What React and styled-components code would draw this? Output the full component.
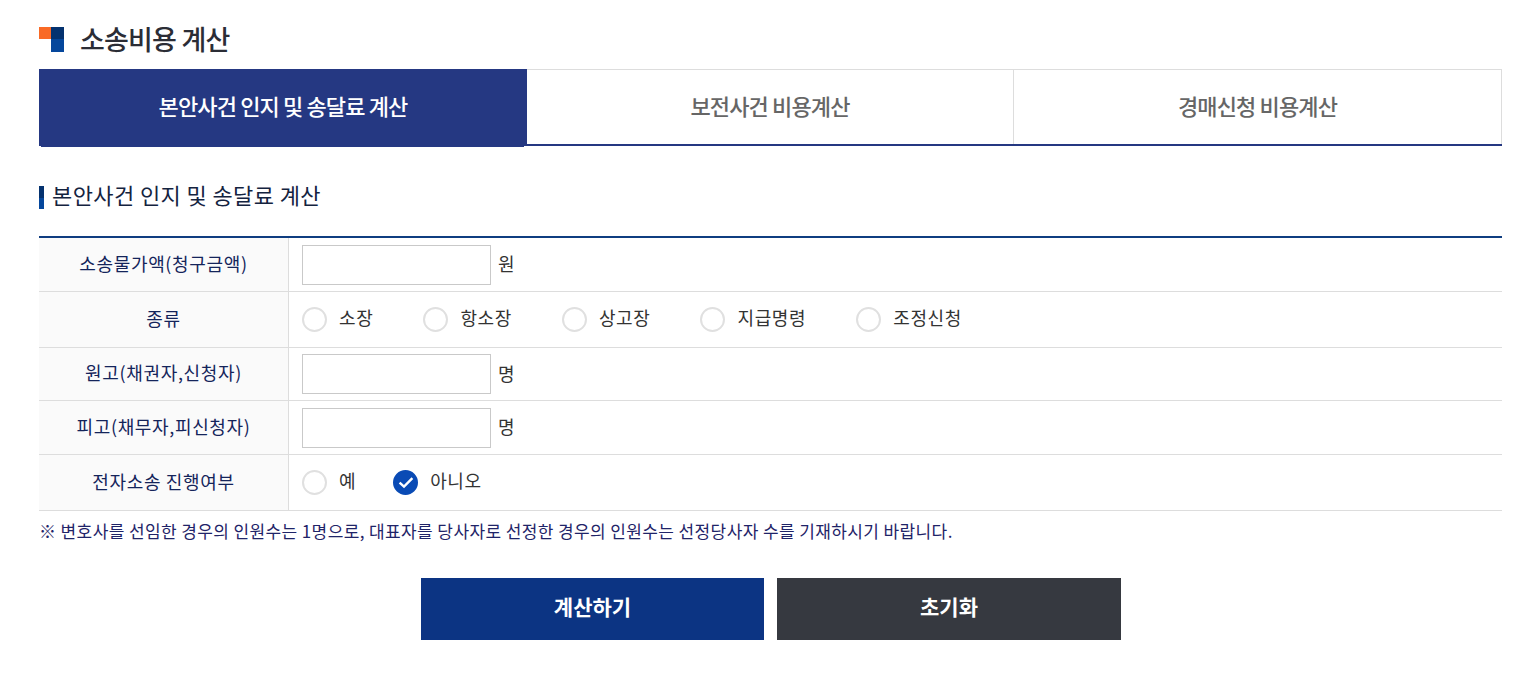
import styled, { createGlobalStyle } from "styled-components"

const GlobalStyle = createGlobalStyle`
  html, body { margin: 0; padding: 0; background: #fff; }
  body { font-family: "Noto Sans CJK KR", "Noto Sans", sans-serif; color: #222; }
  * { box-sizing: border-box; }
`

const kinds = ["소장", "항소장", "상고장", "지급명령", "조정신청"]

const App = () => {
  return (
    <Page>
      <GlobalStyle />
      <TitleRow>
        <TitleMark>
          <svg width="25" height="25" viewBox="0 0 25 25">
            <rect x="0" y="0" width="12" height="12" fill="#f96a26" />
            <rect x="12" y="0" width="13" height="12" fill="#04326f" />
            <rect x="12" y="12" width="13" height="13" fill="#05479c" />
          </svg>
        </TitleMark>
        <Title>소송비용 계산</Title>
      </TitleRow>

      <Tabs>
        <Tab $active>본안사건 인지 및 송달료 계산</Tab>
        <Tab>보전사건 비용계산</Tab>
        <Tab>경매신청 비용계산</Tab>
      </Tabs>

      <SubTitle>본안사건 인지 및 송달료 계산</SubTitle>

      <Table>
        <Row $h={54}>
          <Label>소송물가액(청구금액)</Label>
          <Cell>
            <Field type="text" />
            <Unit>원</Unit>
          </Cell>
        </Row>
        <Row $h={56}>
          <Label>종류</Label>
          <Cell>
            <Radios $gap={50}>
              {kinds.map((k) => (
                <RadioItem key={k}>
                  <RadioDot />
                  <RadioText>{k}</RadioText>
                </RadioItem>
              ))}
            </Radios>
          </Cell>
        </Row>
        <Row $h={53}>
          <Label>원고(채권자,신청자)</Label>
          <Cell>
            <Field type="text" />
            <Unit>명</Unit>
          </Cell>
        </Row>
        <Row $h={54}>
          <Label>피고(채무자,피신청자)</Label>
          <Cell>
            <Field type="text" />
            <Unit>명</Unit>
          </Cell>
        </Row>
        <Row $h={56}>
          <Label>전자소송 진행여부</Label>
          <Cell>
            <Radios $gap={37}>
              <RadioItem>
                <RadioDot />
                <RadioText>예</RadioText>
              </RadioItem>
              <RadioItem>
                <RadioDot $checked>
                  <svg width="16" height="13" viewBox="0 0 16 13" fill="none">
                    <path d="M1.6 6.6 L6 10.6 L14.4 2.2" stroke="#fff" strokeWidth="2.4" />
                  </svg>
                </RadioDot>
                <RadioText>아니오</RadioText>
              </RadioItem>
            </Radios>
          </Cell>
        </Row>
      </Table>

      <Notice>※ 변호사를 선임한 경우의 인원수는 1명으로, 대표자를 당사자로 선정한 경우의 인원수는 선정당사자 수를 기재하시기 바랍니다.</Notice>

      <Buttons>
        <Button $bg="#0c3483" $w={343}>계산하기</Button>
        <Button $bg="#363940" $w={344}>초기화</Button>
      </Buttons>
    </Page>
  )
}

export default App

const Page = styled.div`
  width: 1518px;
  padding: 0 16px 43px 39px;
`
const TitleRow = styled.div`
  display: flex;
  align-items: center;
  height: 69px;
  padding-top: 9px;
`
const TitleMark = styled.div`
  display: flex;
  width: 41px;
  height: 25px;
`
const Title = styled.h1`
  margin: 0;
  font-size: 27px;
  font-weight: 500;
  letter-spacing: -0.8px;
  line-height: 40px;
  color: #2b2d36;
`
const Tabs = styled.div`
  display: grid;
  grid-template-columns: 488px 487px 488px;
  height: 77px;
  border-bottom: 2px solid #253882;
`
const Tab = styled.div`
  position: relative;
  display: flex;
  align-items: center;
  justify-content: center;
  height: ${(p) => (p.$active ? "76px" : "75px")};
  font-size: 22px;
  font-weight: 500;
  letter-spacing: -0.87px;
  padding-bottom: 5px;
  padding-left: ${(p) => (p.$active ? "1px" : "0")};
  color: ${(p) => (p.$active ? "#fff" : "#666")};
  background: ${(p) => (p.$active ? "#253882" : "#fff")};
  border-top: 1px solid ${(p) => (p.$active ? "#253882" : "#ddd")};
  border-right: 1px solid ${(p) => (p.$active ? "#253882" : "#ddd")};

  &::after {
    content: "";
    display: ${(p) => (p.$active ? "block" : "none")};
    position: absolute;
    left: 2px;
    right: 2px;
    bottom: -2px;
    height: 2px;
    background: #253882;
  }
`
const SubTitle = styled.h2`
  margin: 36px 0 0;
  height: 27px;
  padding-left: 13px;
  position: relative;
  font-size: 22px;
  font-weight: 400;
  line-height: 24px;
  letter-spacing: 0.4px;
  color: #14233f;

  &::before {
    content: "";
    position: absolute;
    left: 0;
    top: 4px;
    width: 5px;
    height: 23px;
    background: linear-gradient(#04326f 50%, #05479c 50%);
  }
`
const Table = styled.div`
  margin-top: 27px;
  border-top: 2px solid #0f3d80;
`
const Row = styled.div`
  display: flex;
  height: ${(p) => p.$h}px;
  border-bottom: 1px solid #ddd;
`
const Label = styled.div`
  display: flex;
  align-items: center;
  justify-content: center;
  width: 250px;
  padding-bottom: 4px;
  background: #fafafa;
  border-right: 1px solid #ddd;
  font-size: 18px;
  font-weight: 400;
  letter-spacing: 0.65px;
  color: #14245a;
`
const Cell = styled.div`
  flex: 1;
  display: flex;
  align-items: center;
  padding-left: 13px;
`
const Field = styled.input`
  width: 189px;
  height: 40px;
  margin: 0;
  padding: 0 8px;
  border: 1px solid #c9c9c9;
  border-radius: 0;
  background: #fff;
  outline: none;
`
const Unit = styled.span`
  margin: -3px 0 0 7px;
  font-size: 18px;
  letter-spacing: 0.5px;
  color: #333;
`
const Radios = styled.div`
  display: flex;
  align-items: center;
  gap: ${(p) => p.$gap}px;
`
const RadioItem = styled.label`
  display: flex;
  align-items: center;
  gap: 12px;
`
const RadioDot = styled.span`
  display: flex;
  align-items: center;
  justify-content: center;
  width: 25px;
  height: 25px;
  border-radius: 50%;
  border: 2px solid ${(p) => (p.$checked ? "#0a4bb5" : "#e0e0e0")};
  background: ${(p) => (p.$checked ? "#0a4bb5" : "#fff")};
`
const RadioText = styled.span`
  font-size: 18px;
  letter-spacing: 0.62px;
  line-height: 25px;
  margin-top: -5px;
  color: #333;
`
const Notice = styled.p`
  margin: 8px 0 0;
  font-size: 17px;
  font-weight: 400;
  line-height: 24px;
  letter-spacing: 0.39px;
  color: #1f2468;
`
const Buttons = styled.div`
  display: flex;
  justify-content: center;
  gap: 13px;
  margin-top: 35px;
  padding-left: 1px;
`
const Button = styled.button`
  width: ${(p) => p.$w}px;
  height: 62px;
  padding: 0 0 6px;
  border: 0;
  background: ${(p) => p.$bg};
  color: #fff;
  font-family: inherit;
  font-size: 21px;
  font-weight: 700;
`
